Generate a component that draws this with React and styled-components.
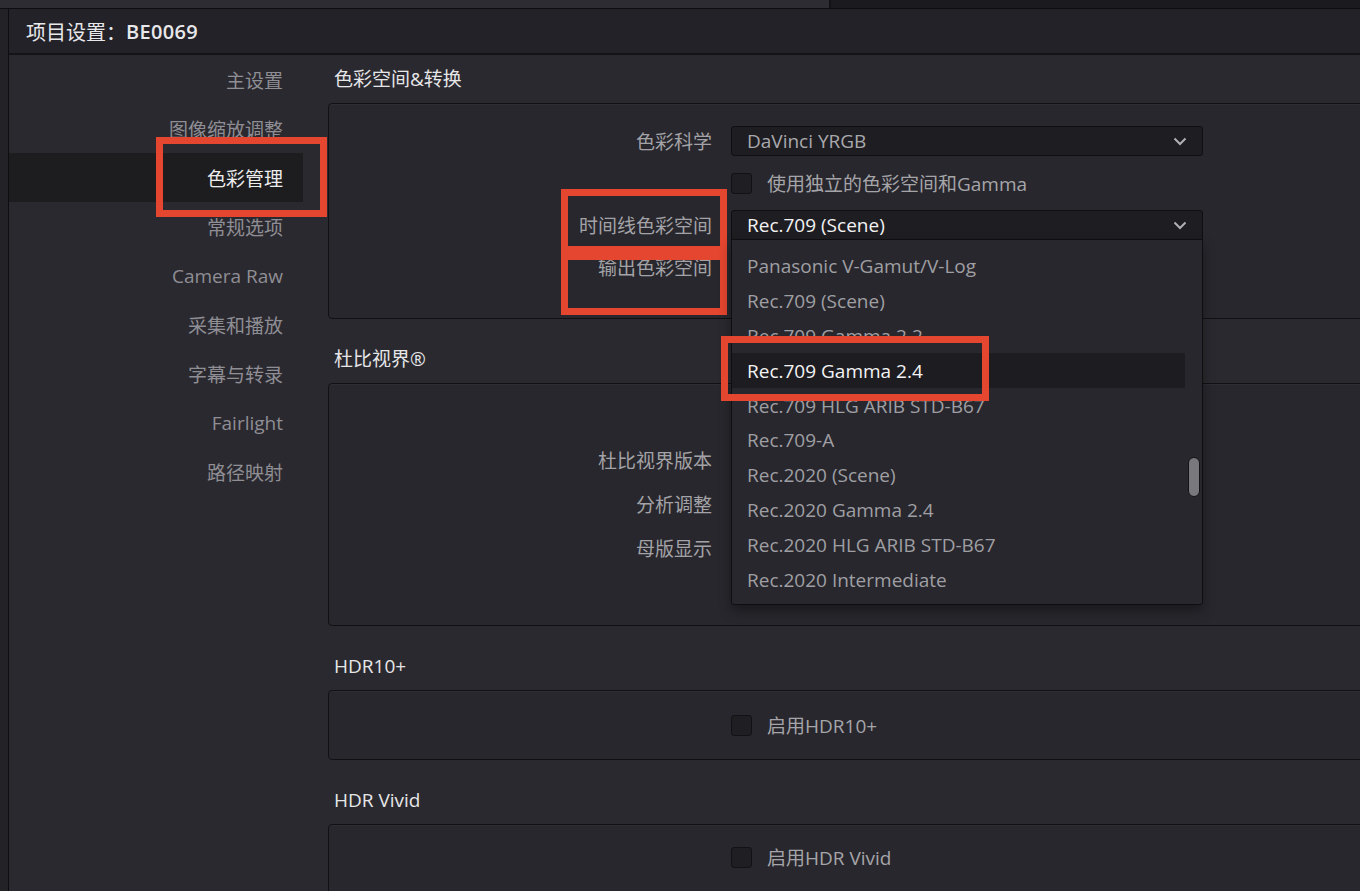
import React from 'react';
import styled, { createGlobalStyle } from 'styled-components';

const GlobalStyle = createGlobalStyle`
    html, body {
        margin: 0;
        padding: 0;
        background: #2a292f;
        overflow: hidden;
    }
    body {
        font-family: 'Open Sans', 'Noto Sans CJK SC', sans-serif;
    }
`;

const Screen = styled.div`
    width: 1360px;
    height: 891px;
    display: flex;
    flex-direction: column;
    overflow: hidden;
    background: #2a292f;
`;

const TopStrip = styled.div`
    height: 8px;
    flex-shrink: 0;
    display: flex;
    border-bottom: 1px solid #0d0d0f;
`;

const StripPart = styled.div`
    width: ${(p) => (p.$w ? p.$w + 'px' : 'auto')};
    flex: ${(p) => (p.$w ? 'none' : 1)};
    background: ${(p) => p.$bg};
    border-right: ${(p) => (p.$w ? '2px solid #121114' : 'none')};
`;

const Main = styled.div`
    flex: 1;
    display: flex;
    min-height: 0;
`;

const Gutter = styled.div`
    width: 8px;
    flex-shrink: 0;
    background: #232227;
    border-right: 1px solid #0e0e10;
`;

const Window = styled.div`
    flex: 1;
    display: flex;
    flex-direction: column;
    min-width: 0;
`;

const TitleBar = styled.div`
    height: 46px;
    flex-shrink: 0;
    box-sizing: border-box;
    display: flex;
    align-items: center;
    padding-left: 17px;
    background: #232228;
    border-bottom: 2px solid #141416;
    color: #e8e8ea;
    font-size: 20px;
    b {
        font-weight: 600;
        letter-spacing: 0.3px;
    }
`;

const Body = styled.div`
    flex: 1;
    display: flex;
    min-height: 0;
`;

const Sidebar = styled.nav`
    width: 294px;
    flex-shrink: 0;
    display: flex;
    flex-direction: column;
`;

const NavItem = styled.div`
    position: relative;
    height: 49px;
    display: flex;
    align-items: center;
    justify-content: flex-end;
    padding-right: 20px;
    font-size: 19px;
    color: ${(p) => (p.$active ? '#ededee' : '#8f8e94')};
    background: ${(p) => (p.$active ? '#1d1d20' : 'transparent')};
`;

const Frame = styled.div`
    position: absolute;
    box-sizing: border-box;
    border: 7px solid #e4462f;
    pointer-events: none;
    z-index: 3;
    top: ${(p) => p.$top}px;
    width: ${(p) => p.$width}px;
    height: ${(p) => p.$height}px;
    ${(p) => (p.$left !== undefined ? `left: ${p.$left}px;` : '')}
    ${(p) => (p.$right !== undefined ? `right: ${p.$right}px;` : '')}
`;

const Content = styled.div`
    flex: 1;
    min-width: 0;
    padding-left: 25px;
`;

const SectionTitle = styled.div`
    height: ${(p) => p.$h}px;
    box-sizing: border-box;
    display: flex;
    align-items: flex-end;
    padding: 0 0 12px 6px;
    font-size: 19px;
    line-height: 24px;
    color: #e6e6e8;
`;

const Panel = styled.div`
    position: relative;
    height: ${(p) => p.$h}px;
    box-sizing: border-box;
    margin-right: -12px;
    background: #28272d;
    border: 1px solid #111113;
    border-radius: 4px;
    box-shadow: inset 0 1px 0 rgba(255, 255, 255, 0.03);
`;

const FormGrid = styled.div`
    display: grid;
    grid-template-columns: 383px 472px;
    column-gap: 19px;
    grid-auto-rows: ${(p) => p.$row}px;
    padding-top: ${(p) => p.$pt}px;
    align-items: center;
`;

const Label = styled.div`
    position: relative;
    height: 100%;
    display: flex;
    align-items: center;
    justify-content: flex-end;
    font-size: 19px;
    color: #a3a3a7;
`;

const Select = styled.div`
    position: relative;
    height: 30px;
    box-sizing: border-box;
    display: flex;
    align-items: center;
    justify-content: space-between;
    padding: 0 15px;
    background: #1e1d22;
    border: 1px solid #0f0f11;
    border-radius: ${(p) => (p.$open ? '3px 3px 0 0' : '3px')};
    font-size: 19px;
    color: ${(p) => (p.$open ? '#f2f2f3' : '#a9a9ad')};
`;

const CheckRow = styled.div`
    display: flex;
    align-items: center;
    gap: 15px;
    font-size: 19px;
    color: #a5a5a9;
`;

const Checkbox = styled.span`
    width: 21px;
    height: 21px;
    box-sizing: border-box;
    background: #1f1e23;
    border: 1px solid #121214;
    border-radius: 3px;
`;

const Popup = styled.div`
    position: absolute;
    top: 100%;
    left: -1px;
    right: -1px;
    height: 366px;
    box-sizing: border-box;
    padding: 9px 17px 0 0;
    background: #28272d;
    border: 1px solid #0f0f11;
    border-radius: 0 0 3px 3px;
    box-shadow: 0 6px 12px rgba(0, 0, 0, 0.35);
    z-index: 5;
`;

const Option = styled.div`
    position: relative;
    height: 34.8px;
    display: flex;
    align-items: center;
    padding-left: 15px;
    white-space: nowrap;
    font-size: 19px;
    color: ${(p) => (p.$active ? '#f3f3f4' : '#9f9fa3')};
    background: ${(p) => (p.$active ? '#1d1c21' : 'transparent')};
`;

const Thumb = styled.div`
    position: absolute;
    top: 217px;
    right: 2px;
    width: 12px;
    height: 40px;
    box-sizing: border-box;
    background: #78787d;
    border: 1px solid #141416;
    border-radius: 6px;
`;

const Chevron = () => (
    <svg width='14' height='9' viewBox='0 0 14 9'>
        <polyline
            points='1.5,1.5 7,7 12.5,1.5'
            fill='none'
            stroke='#b0b0b4'
            strokeWidth='2'
        />
    </svg>
);

const navItems = [
    '主设置',
    '图像缩放调整',
    '色彩管理',
    '常规选项',
    'Camera Raw',
    '采集和播放',
    '字幕与转录',
    'Fairlight',
    '路径映射',
];

const colorSpaces = [
    'Panasonic V-Gamut/V-Log',
    'Rec.709 (Scene)',
    'Rec.709 Gamma 2.2',
    'Rec.709 Gamma 2.4',
    'Rec.709 HLG ARIB STD-B67',
    'Rec.709-A',
    'Rec.2020 (Scene)',
    'Rec.2020 Gamma 2.4',
    'Rec.2020 HLG ARIB STD-B67',
    'Rec.2020 Intermediate',
];

const App = () => {
    const active = '色彩管理';
    const picked = 'Rec.709 Gamma 2.4';

    return (
        <Screen>
            <GlobalStyle />
            <TopStrip>
                <StripPart $w={829} $bg='#2d2c32' />
                <StripPart $bg='#1b1a1e' />
            </TopStrip>
            <Main>
                <Gutter />
                <Window>
                    <TitleBar>
                        项目设置：<b>BE0069</b>
                    </TitleBar>
                    <Body>
                        <Sidebar>
                            {navItems.map((item) => (
                                <NavItem key={item} $active={item === active}>
                                    {item}
                                    {item === active && (
                                        <Frame $top={-16} $left={147} $width={171} $height={80} />
                                    )}
                                </NavItem>
                            ))}
                        </Sidebar>
                        <Content>
                            <SectionTitle $h={48}>色彩空间&amp;转换</SectionTitle>
                            <Panel $h={216}>
                                <FormGrid $row={42} $pt={16}>
                                    <Label>色彩科学</Label>
                                    <Select>
                                        DaVinci YRGB
                                        <Chevron />
                                    </Select>

                                    <Label />
                                    <CheckRow>
                                        <Checkbox />
                                        使用独立的色彩空间和Gamma
                                    </CheckRow>

                                    <Label>
                                        时间线色彩空间
                                        <Frame $top={-15} $right={-15} $width={166} $height={64} />
                                    </Label>
                                    <Select $open>
                                        Rec.709 (Scene)
                                        <Chevron />
                                        <Popup>
                                            {colorSpaces.map((cs) => (
                                                <Option key={cs} $active={cs === picked}>
                                                    {cs}
                                                    {cs === picked && (
                                                        <Frame $top={-17} $left={-11} $width={268} $height={65} />
                                                    )}
                                                </Option>
                                            ))}
                                            <Thumb />
                                        </Popup>
                                    </Select>

                                    <Label>
                                        输出色彩空间
                                        <Frame $top={7} $right={-15} $width={166} $height={62} />
                                    </Label>
                                    <div />
                                </FormGrid>
                            </Panel>

                            <SectionTitle $h={64}>杜比视界®</SectionTitle>
                            <Panel $h={243}>
                                <FormGrid $row={44} $pt={54}>
                                    <Label>杜比视界版本</Label>
                                    <div />
                                    <Label>分析调整</Label>
                                    <div />
                                    <Label>母版显示</Label>
                                    <div />
                                </FormGrid>
                            </Panel>

                            <SectionTitle $h={64}>HDR10+</SectionTitle>
                            <Panel $h={70}>
                                <FormGrid $row={68} $pt={0}>
                                    <Label />
                                    <CheckRow>
                                        <Checkbox />
                                        启用HDR10+
                                    </CheckRow>
                                </FormGrid>
                            </Panel>

                            <SectionTitle $h={64}>HDR Vivid</SectionTitle>
                            <Panel $h={120}>
                                <FormGrid $row={64} $pt={0}>
                                    <Label />
                                    <CheckRow>
                                        <Checkbox />
                                        启用HDR Vivid
                                    </CheckRow>
                                </FormGrid>
                            </Panel>
                        </Content>
                    </Body>
                </Window>
            </Main>
        </Screen>
    );
};

export default App;
